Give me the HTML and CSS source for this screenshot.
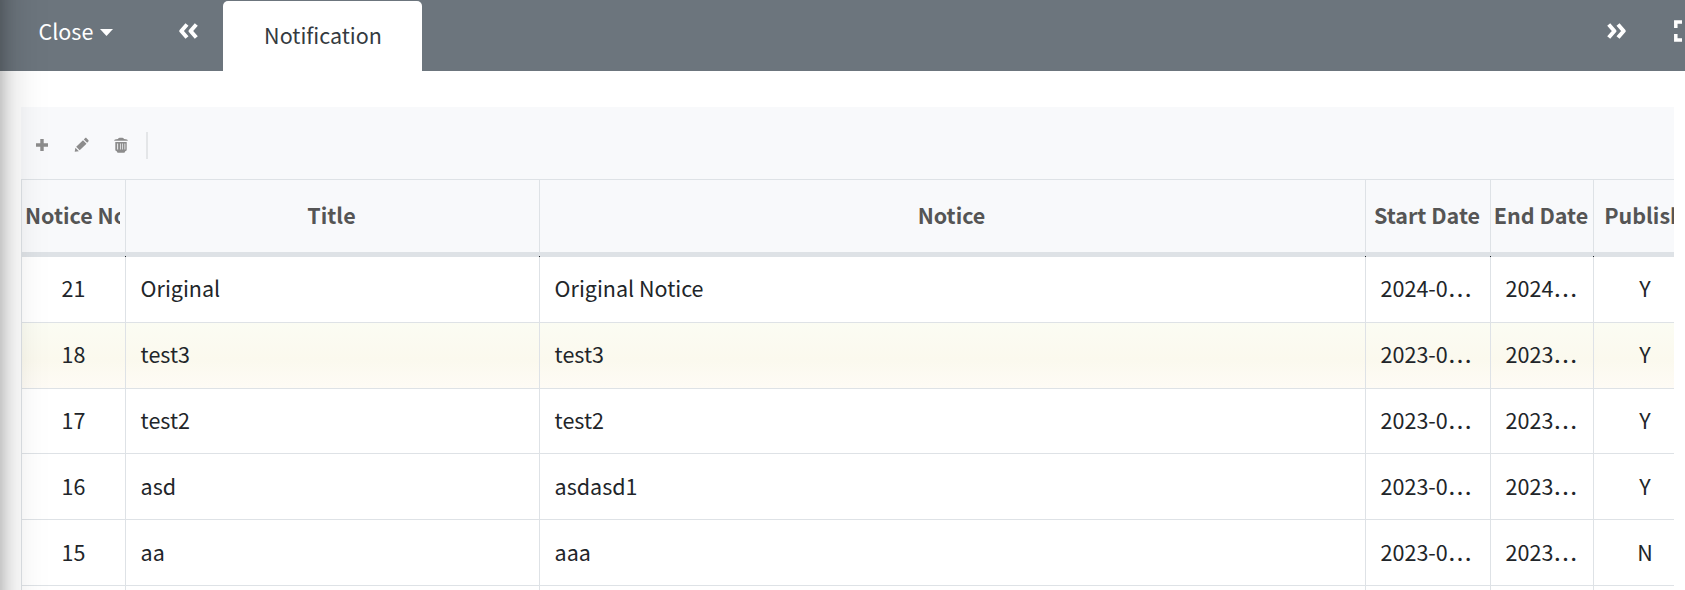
FILE: index.html
```html
<!DOCTYPE html>
<html lang="en">
<head>
<meta charset="utf-8">
<title>Notification</title>
<link rel="stylesheet" href="styles.css">
</head>
<body>
<header class="tabs-bar">
  <div class="close-menu">Close<svg class="caret" viewBox="0 0 13 7"><path d="M0 0h13L6.500 7z"/></svg></div>
  <div class="scroll-left"><svg class="chevrons" viewBox="0 0 19 16"><path d="M8 1.500 2.300 8 8 14.500M17.300 1.500l-5.700 6.500 5.700 6.500"/></svg></div>
  <div class="tab">Notification</div>
  <div class="scroll-right"><svg class="chevrons" viewBox="0 0 19 16"><path d="M1.700 1.500l5.700 6.500-5.700 6.500M11 1.500l5.700 6.500-5.700 6.500"/></svg></div>
  <svg class="expand" viewBox="0 0 22 22"><path d="M1.800 8V2.100H8M14 2.100h6.200V8M1.800 14v5.900H8M14 19.900h6.200V14"/></svg>
</header>
<main class="panel">
  <div class="toolbar">
    <svg class="tool" viewBox="0 0 16 16"><path d="M6.300 2h3.400v4.300H14v3.400H9.700V14H6.300V9.700H2V6.300h4.300z"/></svg>
    <svg class="tool" viewBox="0 0 16 16"><path d="M.7 14.800l.7-4.100 3.500 3.500zM2.200 9.800L9 3.200l3.500 3.500-6.800 6.600zM9.800 2.400L11 1.200c.5-.5 1.100-.5 1.600 0l1.700 1.700c.5.500.5 1.200 0 1.700L13.200 5.800z"/></svg>
    <svg class="tool" viewBox="0 0 16 16"><path d="M1.200 3.800c0-1.300 1-1.600 3.800-1.800C5.200 1 6 .7 8 .7s2.800.3 3 1.300c2.800.2 3.800.5 3.800 1.800z"/><path fill-rule="evenodd" d="M2.300 5h11.400v7.500c0 1-.6 1.500-1.500 1.700-.2 1-.8 1.500-1.700 1.500h-5c-.9 0-1.500-.5-1.700-1.500-.9-.2-1.500-.7-1.500-1.700zM4.200 6.500v6h.9v-6zM7 6.500v6h.7v-6zM9.200 6.500v6h.7v-6zM11.500 6.500v6h.8v-6z"/></svg>
    <span class="divider"></span>
  </div>
  <div class="grid">
    <div class="row head">
      <div class="cell"><span class="label">Notice No</span></div><div class="cell">Title</div><div class="cell">Notice</div><div class="cell">Start Date</div><div class="cell">End Date</div><div class="cell">Publish</div>
    </div>
    <div class="row"><div class="cell mid">21</div><div class="cell">Original</div><div class="cell">Original Notice</div><div class="cell">2024-0<span class="dots">…</span></div><div class="cell">2024<span class="dots">…</span></div><div class="cell mid">Y</div></div>
    <div class="row hover"><div class="cell mid">18</div><div class="cell">test3</div><div class="cell">test3</div><div class="cell">2023-0<span class="dots">…</span></div><div class="cell">2023<span class="dots">…</span></div><div class="cell mid">Y</div></div>
    <div class="row short"><div class="cell mid">17</div><div class="cell">test2</div><div class="cell">test2</div><div class="cell">2023-0<span class="dots">…</span></div><div class="cell">2023<span class="dots">…</span></div><div class="cell mid">Y</div></div>
    <div class="row low"><div class="cell mid">16</div><div class="cell">asd</div><div class="cell">asdasd1</div><div class="cell">2023-0<span class="dots">…</span></div><div class="cell">2023<span class="dots">…</span></div><div class="cell mid">Y</div></div>
    <div class="row low"><div class="cell mid">15</div><div class="cell">aa</div><div class="cell">aaa</div><div class="cell">2023-0<span class="dots">…</span></div><div class="cell">2023<span class="dots">…</span></div><div class="cell mid">N</div></div>
    <div class="row"><div class="cell"></div><div class="cell"></div><div class="cell"></div><div class="cell"></div><div class="cell"></div><div class="cell"></div></div>
  </div>
</main>
<div class="sidebar-edge"></div>
</body>
</html>
```
FILE: styles.css
```css
* { box-sizing: border-box; }
body {
  margin: 0;
  height: 590px;
  overflow: hidden;
  position: relative;
  background: #fff;
  color: #212529;
  font: 21.5px/36px "Source Sans Pro", "Noto Sans CJK JP", sans-serif;
}
svg { display: block; flex: none; }
.tabs-bar {
  height: 71px;
  display: flex;
  background: #6c757d;
  color: #fff;
  overflow: hidden;
}
.tabs-bar > * { flex: none; }
.close-menu {
  width: 141px;
  padding: 13px 0 0 38.500px;
  display: flex;
  gap: 6.500px;
}
.caret { width: 13px; height: 7px; margin-top: 16px; fill: #fff; }
.scroll-left { width: 82px; padding: 23px 0 0 38px; }
.chevrons { width: 19px; height: 16px; fill: none; stroke: #fff; stroke-width: 4; stroke-linejoin: round; }
.tab {
  width: 199px;
  margin-top: 1px;
  padding: 16px 0 0 1px;
  text-align: center;
  background: #fff;
  color: #343a40;
  border-radius: 5px 5px 0 0;
}
.scroll-right { margin-left: 1185px; width: 67px; padding-top: 23px; }
.expand { width: 22px; height: 22px; margin-top: 20px; fill: none; stroke: #fff; stroke-width: 3.5; }
.panel { margin: 36px 11px 0 21px; overflow: hidden; height: 483px; }
.toolbar {
  height: 72px;
  display: flex;
  align-items: center;
  padding-left: 13px;
  gap: 23.500px;
  background: #f8f9fb;
}
.tool { width: 16px; height: 16px; fill: #8c8c8c; margin-top: 4px; }
.divider { width: 2px; height: 27px; background: #e4e6e8; margin: 5px 0 0 -7px; }
.grid { border-top: 1px solid #dee2e6; border-left: 1px solid #dee2e6; }
.row {
  display: grid;
  grid-template-columns: 104px 414px 826px 125px 103px 103px;
  width: 1675px;
  height: 66px;
  border-bottom: 1px solid #dee2e6;
}
.row.short { height: 65px; }
.cell { padding: 13px 14.600px 0; border-right: 1px solid #dee2e6; white-space: nowrap; overflow: hidden; }
.low .cell { padding-top: 14px; }
.mid { text-align: center; }
.dots { font-size: 24.500px; line-height: 0; vertical-align: -7.500px; }
.head { height: 77px; border-bottom: 5px solid #dee2e6; background: #f8f9fb; color: #555; font-weight: 700; }
.head .cell { position: relative; padding: 17px 2px 0 0; text-align: center; overflow: visible; }
.head .cell::after {
  content: "";
  position: absolute;
  right: -1px;
  bottom: -5px;
  width: 1px;
  height: 1px;
  background: #212529;
}
.label { display: block; margin: 0 3px 0 3px; overflow: hidden; text-align: left; }
.hover { background: linear-gradient(#fbfcf3, #fbf9ee 56%, #fefbf5); }
.sidebar-edge {
  position: absolute;
  left: -200px;
  top: -60px;
  width: 200px;
  height: 760px;
  box-shadow: 0 21px 42px rgba(0, 0, 0, .25), 0 15px 15px rgba(0, 0, 0, .22);
}
```
